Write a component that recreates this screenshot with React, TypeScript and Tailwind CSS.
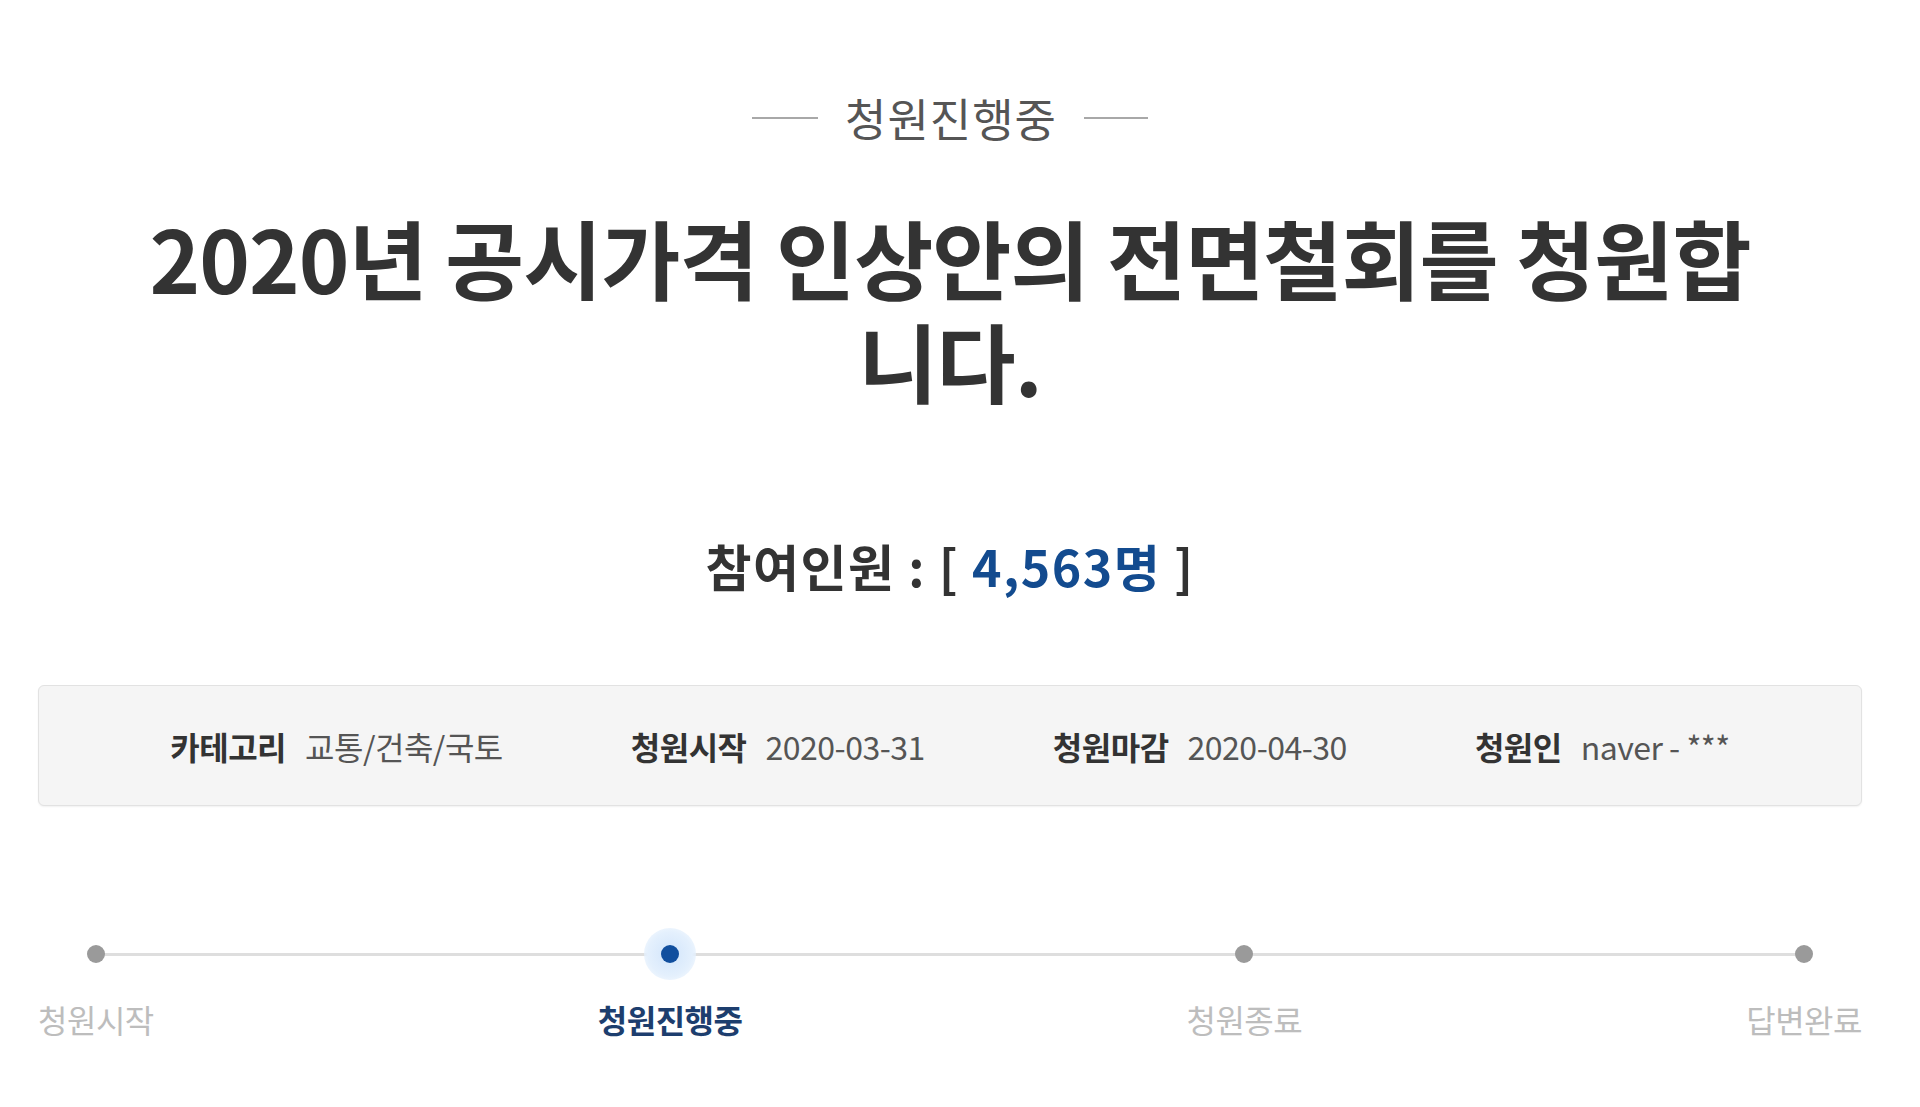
import React from "react";

const font = { fontFamily: '"Noto Sans CJK KR", "Noto Sans", sans-serif' };

function InfoItem({ label, value }: { label: string; value: string }) {
  return (
    <div className="flex items-center gap-[19px] text-[32px] leading-[38px] tracking-[-0.5px]">
      <span className="font-bold text-[#333333]">{label}</span>
      <span className="text-[#555555]">{value}</span>
    </div>
  );
}

function Step({ label, active }: { label: string; active?: boolean }) {
  return (
    <div className="flex flex-col items-center">
      <div className="flex h-[60px] w-[60px] items-center justify-center">
        {active ? (
          <div className="flex h-[52px] w-[52px] items-center justify-center rounded-full bg-[radial-gradient(circle,#d2e5fb_0%,#e4f0fd_60%,rgba(255,255,255,0)_100%)]">
            <div className="h-[18px] w-[18px] rounded-full bg-[#114f9e]" />
          </div>
        ) : (
          <div className="h-[18px] w-[18px] rounded-full bg-[#9a9a9a]" />
        )}
      </div>
      <div
        className={
          "mt-[16px] text-[32px] leading-[38px] tracking-[-0.5px] " +
          (active ? "font-bold text-[#1d3e6e]" : "text-[#bdbdbd]")
        }
      >
        {label}
      </div>
    </div>
  );
}

export default function App() {
  return (
    <div className="min-h-[1107px] w-full bg-white" style={font}>
      <div className="pl-[38px] pr-[58px] pt-[93px]">
        <div className="flex items-center justify-center gap-[27px]">
          <div className="h-[2px] w-[66px] bg-[#a8a8a8]" />
          <div className="text-[45px] leading-[50px] tracking-[1px] text-[#555555]">청원진행중</div>
          <div className="h-[2px] w-[64px] bg-[#a8a8a8]" />
        </div>

        <h1 className="mx-auto mt-[62px] max-w-[1640px] text-center text-[86px] font-bold leading-[103px] tracking-[-1px] text-[#333333]">
          2020년 공시가격 인상안의 전면철회를 청원합니다.
        </h1>

        <div className="mt-[125px] text-center text-[50px] font-bold leading-[58px] tracking-[1.5px] text-[#333333]">
          참여인원 : [ <span className="text-[#134b8f]">4,563명</span> ]
        </div>

        <div className="mt-[91px] flex h-[121px] items-center justify-center gap-[128px] rounded-[6px] border border-[#e2e2e2] bg-[#f5f5f5] shadow-[0_1px_2px_rgba(0,0,0,0.06)]">
          <InfoItem label="카테고리" value="교통/건축/국토" />
          <InfoItem label="청원시작" value="2020-03-31" />
          <InfoItem label="청원마감" value="2020-04-30" />
          <InfoItem label="청원인" value="naver - ***" />
        </div>

        <div className="relative mt-[118px] flex justify-between">
          <div className="absolute left-[62px] right-[60px] top-[29px] h-[3px] bg-[#dedede]" />
          <div className="relative">
            <Step label="청원시작" />
          </div>
          <div className="relative">
            <Step label="청원진행중" active />
          </div>
          <div className="relative">
            <Step label="청원종료" />
          </div>
          <div className="relative">
            <Step label="답변완료" />
          </div>
        </div>
      </div>
    </div>
  );
}
